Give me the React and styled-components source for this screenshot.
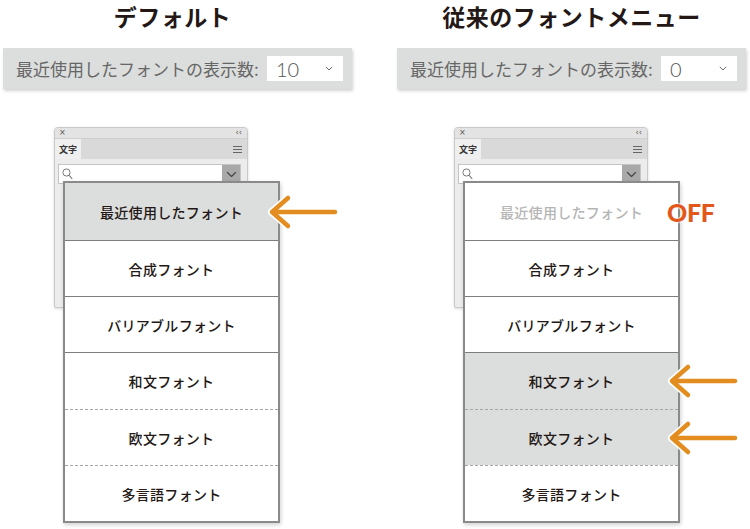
import styled, { createGlobalStyle } from 'styled-components';

const GlobalStyle = createGlobalStyle`
  body {
    margin: 0;
    background: #fff;
    font-family: "Noto Sans CJK JP", "Noto Sans", sans-serif;
  }
`;

const Page = styled.div`
  display: flex;
  gap: 45px;
  padding-left: 3px;
  width: 750px;
  height: 529px;
  box-sizing: border-box;
  overflow: hidden;
`;

const Column = styled.div`
  width: 349px;
  display: flex;
  flex-direction: column;
`;

const Title = styled.h2`
  margin: 0;
  padding-top: 2px;
  height: 28px;
  line-height: 28px;
  font-size: 23px;
  font-weight: 700;
  color: #231815;
  text-align: center;
  padding-right: ${(p) => p.$pr || 0}px;
  letter-spacing: 0.5px;
`;

const SettingBar = styled.div`
  margin-top: 18px;
  height: 41px;
  display: flex;
  align-items: center;
  justify-content: space-between;
  padding: 0 9px 0 13px;
  background: #dcdddd;
  box-shadow: 1px 2px 3px rgba(0, 0, 0, 0.18);
`;

const SettingLabel = styled.span`
  font-size: 17px;
  color: #666;
  white-space: nowrap;
`;

const Select = styled.div`
  width: 76px;
  height: 25px;
  flex-shrink: 0;
  background: #fff;
  display: flex;
  align-items: center;
  justify-content: space-between;
  padding: 0 10px 0 9px;
  box-sizing: border-box;
  font-family: "Lato", "Noto Sans", sans-serif;
  font-size: 20px;
  font-weight: 300;
  color: #555;
`;

const PanelArea = styled.div`
  position: relative;
  margin-top: 38px;
  margin-left: ${(p) => p.$shift}px;
  height: 396px;
`;

const Panel = styled.div`
  width: 194px;
  height: 181px;
  box-sizing: border-box;
  background: #ececec;
  border: 1px solid #c9c9c9;
  border-radius: 4px 4px 2px 2px;
  box-shadow: 0 1px 3px rgba(0, 0, 0, 0.15);
  overflow: hidden;
`;

const PanelHeader = styled.div`
  height: 10px;
  display: flex;
  align-items: center;
  justify-content: space-between;
  padding: 0 5px 0 4px;
  background: #e3e3e3;
  font-family: "DejaVu Sans", sans-serif;
  font-size: 8px;
  color: #555;
  line-height: 1;
`;

const TabBar = styled.div`
  height: 20px;
  display: flex;
  align-items: stretch;
  justify-content: space-between;
  background: #d9d9d9;
  border-top: 1px solid #cfcfcf;
`;

const Tab = styled.div`
  width: 26px;
  display: flex;
  align-items: center;
  justify-content: center;
  background: #efefef;
  font-size: 9px;
  font-weight: 700;
  color: #333;
`;

const Burger = styled.div`
  width: 9px;
  margin-right: 5px;
  display: flex;
  flex-direction: column;
  justify-content: center;
  gap: 2px;
  span {
    height: 1px;
    background: #666;
  }
`;

const SearchField = styled.div`
  margin: 5px 6px 0 3px;
  height: 18px;
  display: flex;
  align-items: stretch;
  background: #fff;
  border: 1px solid #c4c4c4;
`;

const SearchIcon = styled.div`
  flex: 1;
  display: flex;
  align-items: center;
  padding-left: 3px;
`;

const DropButton = styled.div`
  width: 18px;
  background: #a9a9a9;
  display: flex;
  align-items: center;
  justify-content: center;
`;

const Menu = styled.div`
  position: absolute;
  top: 54px;
  left: 9px;
  width: 217px;
  box-sizing: border-box;
  border: 2px solid #8a8a8a;
  background: #fff;
  box-shadow: 1px 2px 4px rgba(0, 0, 0, 0.18);
`;

const Row = styled.div`
  position: relative;
  box-sizing: border-box;
  height: ${(p) => p.$h}px;
  display: flex;
  align-items: center;
  justify-content: center;
  background: ${(p) => (p.$active ? '#dcdddd' : '#fff')};
  border-top: ${(p) =>
    p.$sep === 'solid' ? '1.5px solid #7d7d7d' : p.$sep === 'dashed' ? '1px dashed #a6a6a6' : 'none'};
  font-size: 14px;
  font-weight: 500;
  letter-spacing: 0.3px;
  color: ${(p) => (p.$muted ? '#b5b5b5' : '#231815')};
`;

const ArrowMark = styled.svg`
  position: absolute;
  left: calc(100% - 9px);
  top: 50%;
  transform: translateY(-50%);
  overflow: visible;
`;

const OffMark = styled.span`
  position: absolute;
  left: calc(100% - 11px);
  top: 50%;
  transform: translateY(-50%);
  font-family: "Lato", "Open Sans", sans-serif;
  font-size: 25px;
  font-weight: 900;
  letter-spacing: -0.3px;
  color: #e2581c;
  text-shadow: 0 0 2px #fff, 0 0 2px #fff, 0 0 2px #fff;
`;

function Arrow() {
  const d = 'M19 3 L3 17 L19 31 M3 17 H66';
  return (
    <ArrowMark width="70" height="34" viewBox="0 0 70 34">
      <path d={d} fill="none" stroke="#fff" strokeWidth="8" strokeLinecap="round" strokeLinejoin="round" />
      <path d={d} fill="none" stroke="#e38c1f" strokeWidth="4.5" strokeLinecap="round" strokeLinejoin="round" />
    </ArrowMark>
  );
}

function Chevron({ color, size }) {
  return (
    <svg width={size} height={size * 0.6} viewBox="0 0 10 6">
      <path d="M1 1 L5 5 L9 1" fill="none" stroke={color} strokeWidth="1.2" />
    </svg>
  );
}

const rows = [
  { label: '最近使用したフォント', h: 57 },
  { label: '合成フォント', h: 56, sep: 'solid' },
  { label: 'バリアブルフォント', h: 56, sep: 'solid' },
  { label: '和文フォント', h: 57, sep: 'solid' },
  { label: '欧文フォント', h: 56, sep: 'dashed' },
  { label: '多言語フォント', h: 56, sep: 'dashed' },
];

function FontPanel({ shift, legacy }) {
  return (
    <PanelArea $shift={shift}>
      <Panel>
        <PanelHeader>
          <span>×</span>
          <span>‹‹</span>
        </PanelHeader>
        <TabBar>
          <Tab>文字</Tab>
          <Burger>
            <span />
            <span />
            <span />
          </Burger>
        </TabBar>
        <SearchField>
          <SearchIcon>
            <svg width="11" height="12" viewBox="0 0 11 12">
              <circle cx="4.5" cy="4.5" r="3.6" fill="none" stroke="#777" strokeWidth="1" />
              <path d="M7.2 7.4 L10.2 11" stroke="#777" strokeWidth="1.1" />
            </svg>
          </SearchIcon>
          <DropButton>
            <Chevron color="#444" size={11} />
          </DropButton>
        </SearchField>
      </Panel>
      <Menu>
        {rows.map((r, i) => {
          const active = legacy ? i === 3 || i === 4 : i === 0;
          const muted = legacy && i === 0;
          return (
            <Row key={r.label} $h={r.h} $sep={r.sep} $active={active} $muted={muted}>
              {r.label}
              {!legacy && i === 0 && <Arrow />}
              {legacy && i === 0 && <OffMark>OFF</OffMark>}
              {legacy && (i === 3 || i === 4) && <Arrow />}
            </Row>
          );
        })}
      </Menu>
    </PanelArea>
  );
}

export default function App() {
  return (
    <>
      <GlobalStyle />
      <Page>
        <Column>
          <Title $pr={10}>デフォルト</Title>
          <SettingBar>
            <SettingLabel>最近使用したフォントの表示数:</SettingLabel>
            <Select>
              <span>10</span>
              <Chevron color="#666" size={8} />
            </Select>
          </SettingBar>
          <FontPanel shift={51} />
        </Column>
        <Column>
          <Title>従来のフォントメニュー</Title>
          <SettingBar>
            <SettingLabel>最近使用したフォントの表示数:</SettingLabel>
            <Select>
              <span>0</span>
              <Chevron color="#666" size={8} />
            </Select>
          </SettingBar>
          <FontPanel shift={57} legacy />
        </Column>
      </Page>
    </>
  );
}
